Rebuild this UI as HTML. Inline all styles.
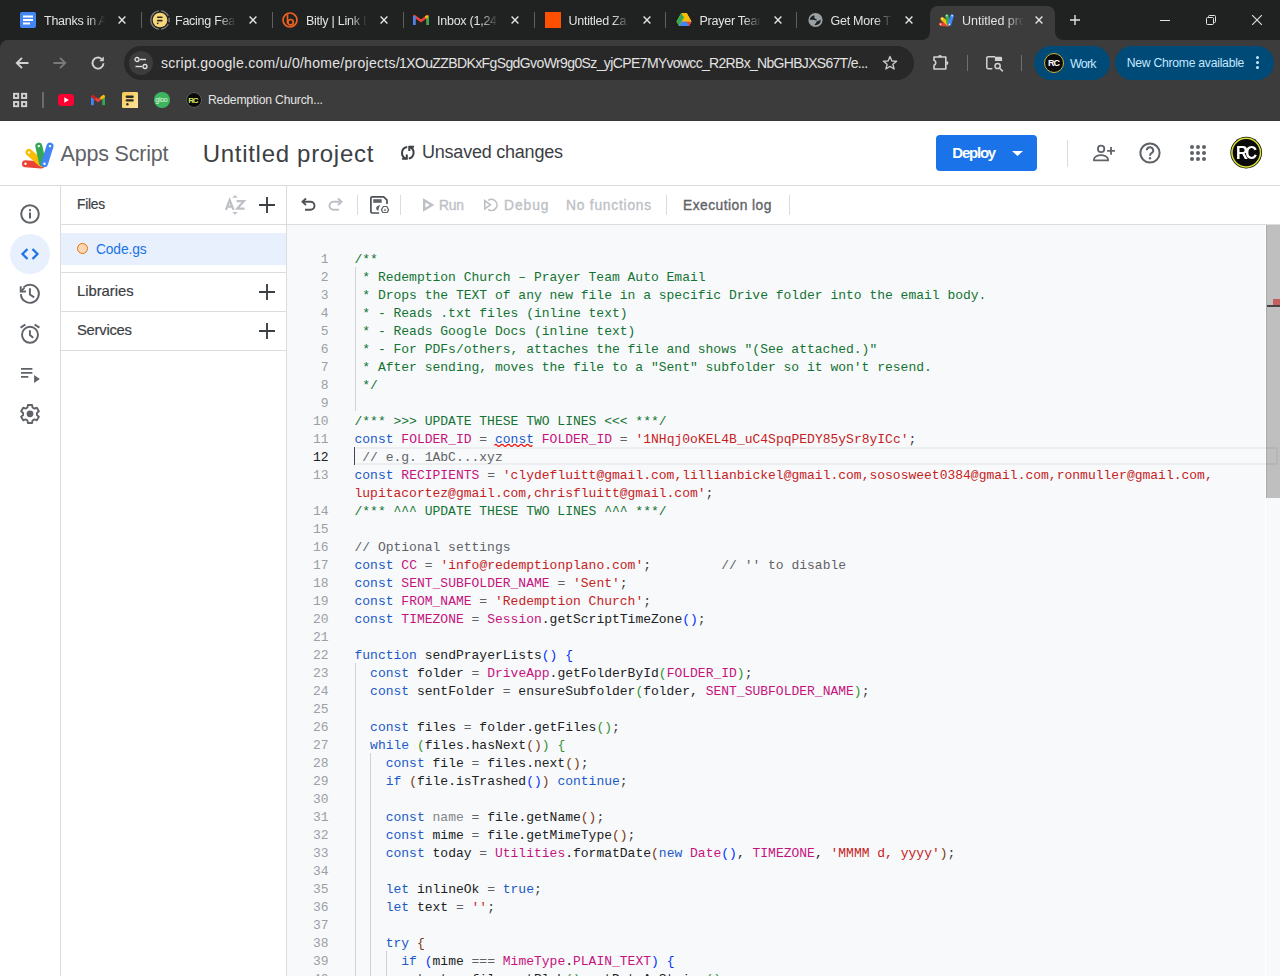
<!DOCTYPE html><html><head><meta charset="utf-8"><title>Apps Script</title><style>
*{margin:0;padding:0;box-sizing:content-box}
html,body{width:1280px;height:976px;overflow:hidden;background:#fff;position:relative}
.r{position:absolute;display:block}
.t{position:absolute;white-space:nowrap}
.ln{position:absolute;left:287px;width:41.6px;text-align:right;font-family:"Liberation Mono",monospace;font-size:13px;line-height:18px;color:#9aa0a6;height:18px}
.ln.cur{color:#202124}
.cl{position:absolute;left:354.5px;font-family:"Liberation Mono",monospace;font-size:13px;line-height:18px;color:#202124;white-space:pre;height:18px}
.c{color:#137333}.k{color:#1b5ac8}.v{color:#c5137e}.s{color:#c5221f}.o{color:#5f6368}.p{color:#3c4043}
.b1{color:#0431fa}.b2{color:#319331}.b3{color:#7b3814}.g{color:#80868b}.cm{color:#5f6368}
</style></head><body>
<div class="r" style="left:0px;top:0px;width:1280px;height:120px;background:#202221;"></div>
<div class="r" style="left:0px;top:40px;width:1280px;height:80px;background:#3c3c3c;border-top-left-radius:8px;"></div>
<svg class="r" style="left:20px;top:12px;overflow:visible;" width="16" height="16" viewBox="0 0 16 16"><rect x="0" y="0" width="16" height="16" rx="2" fill="#4285f4"/><rect x="3" y="3.5" width="10" height="2" fill="#fff"/><rect x="3" y="7" width="10" height="2" fill="#fff"/><rect x="3" y="10.5" width="7" height="2" fill="#fff"/></svg>
<div class="t " style="left:44px;top:11.67px;font-size:12.5px;line-height:18px;color:#e3e3e3;font-weight:400;font-family:'Liberation Sans', sans-serif;letter-spacing:-0.25px;width:61px;overflow:hidden;white-space:nowrap;-webkit-mask-image:linear-gradient(90deg,#000 72%,transparent 100%);">Thanks in A</div>
<svg class="r" style="left:118px;top:16px;" width="8" height="8" viewBox="0 0 8 8"><path d="M0.6 0.6L7.4 7.4M7.4 0.6L0.6 7.4" stroke="#e3e3e3" stroke-width="1.4"/></svg>
<div class="r" style="left:141px;top:12px;width:1px;height:16px;background:#5f5f5f;"></div>
<svg class="r" style="left:151px;top:12px;overflow:visible;" width="16" height="16" viewBox="0 0 16 16"><g transform="translate(1 0)"><path d="M7.04 17.15A9.2 9.2 0 0 1 7.04 -1.15M8.96 -1.15A9.2 9.2 0 0 1 16.27 3.97M16.93 5.77A9.2 9.2 0 0 1 16.93 10.23M16.27 12.03A9.2 9.2 0 0 1 8.96 17.15" fill="none" stroke="#7a7a7a" stroke-width="1.4"/><circle cx="8" cy="8" r="7.3" fill="#f8d77a"/><rect x="4.9" y="4.4" width="5.8" height="1.6" rx="0.8" fill="#2b2b2b"/><rect x="4.9" y="7.8" width="5.8" height="1.6" rx="0.8" fill="#2b2b2b"/><circle cx="5.7" cy="11.3" r="0.9" fill="#2b2b2b"/></g></svg>
<div class="t " style="left:175px;top:11.67px;font-size:12.5px;line-height:18px;color:#e3e3e3;font-weight:400;font-family:'Liberation Sans', sans-serif;letter-spacing:-0.25px;width:61px;overflow:hidden;white-space:nowrap;-webkit-mask-image:linear-gradient(90deg,#000 72%,transparent 100%);">Facing Fear</div>
<svg class="r" style="left:249px;top:16px;" width="8" height="8" viewBox="0 0 8 8"><path d="M0.6 0.6L7.4 7.4M7.4 0.6L0.6 7.4" stroke="#e3e3e3" stroke-width="1.4"/></svg>
<div class="r" style="left:272px;top:12px;width:1px;height:16px;background:#5f5f5f;"></div>
<svg class="r" style="left:282px;top:12px;overflow:visible;" width="16" height="16" viewBox="0 0 16 16"><circle cx="8" cy="8" r="7" fill="none" stroke="#ee6123" stroke-width="1.7"/><path d="M5.5 2.5V11.5" stroke="#ee6123" stroke-width="1.7"/><circle cx="8.6" cy="10.2" r="2.7" fill="none" stroke="#ee6123" stroke-width="1.7"/></svg>
<div class="t " style="left:306px;top:11.67px;font-size:12.5px;line-height:18px;color:#e3e3e3;font-weight:400;font-family:'Liberation Sans', sans-serif;letter-spacing:-0.25px;width:61px;overflow:hidden;white-space:nowrap;-webkit-mask-image:linear-gradient(90deg,#000 72%,transparent 100%);">Bitly | Link D</div>
<svg class="r" style="left:380px;top:16px;" width="8" height="8" viewBox="0 0 8 8"><path d="M0.6 0.6L7.4 7.4M7.4 0.6L0.6 7.4" stroke="#e3e3e3" stroke-width="1.4"/></svg>
<div class="r" style="left:403px;top:12px;width:1px;height:16px;background:#5f5f5f;"></div>
<svg class="r" style="left:413px;top:12px;overflow:visible;" width="16" height="16" viewBox="0 0 16 16"><path d="M1.3 13V4L8 9L14.7 4V13" fill="none" stroke="#ea4335" stroke-width="2.4" stroke-linejoin="round"/><path d="M1.3 13V4" stroke="#4285f4" stroke-width="2.6"/><path d="M14.7 13V4" stroke="#34a853" stroke-width="2.6"/><path d="M12.5 5.6L14.7 4" stroke="#fbbc04" stroke-width="2.6"/></svg>
<div class="t " style="left:437px;top:11.67px;font-size:12.5px;line-height:18px;color:#e3e3e3;font-weight:400;font-family:'Liberation Sans', sans-serif;letter-spacing:-0.25px;width:61px;overflow:hidden;white-space:nowrap;-webkit-mask-image:linear-gradient(90deg,#000 72%,transparent 100%);">Inbox (1,24</div>
<svg class="r" style="left:511px;top:16px;" width="8" height="8" viewBox="0 0 8 8"><path d="M0.6 0.6L7.4 7.4M7.4 0.6L0.6 7.4" stroke="#e3e3e3" stroke-width="1.4"/></svg>
<div class="r" style="left:534px;top:12px;width:1px;height:16px;background:#5f5f5f;"></div>
<svg class="r" style="left:544.5px;top:12px;overflow:visible;" width="16" height="16" viewBox="0 0 16 16"><rect x="0" y="0" width="16" height="16" fill="#ff4f00"/></svg>
<div class="t " style="left:568.5px;top:11.67px;font-size:12.5px;line-height:18px;color:#e3e3e3;font-weight:400;font-family:'Liberation Sans', sans-serif;letter-spacing:-0.25px;width:61px;overflow:hidden;white-space:nowrap;-webkit-mask-image:linear-gradient(90deg,#000 72%,transparent 100%);">Untitled Za</div>
<svg class="r" style="left:642.5px;top:16px;" width="8" height="8" viewBox="0 0 8 8"><path d="M0.6 0.6L7.4 7.4M7.4 0.6L0.6 7.4" stroke="#e3e3e3" stroke-width="1.4"/></svg>
<div class="r" style="left:665px;top:12px;width:1px;height:16px;background:#5f5f5f;"></div>
<svg class="r" style="left:675.5px;top:12px;overflow:visible;" width="16" height="16" viewBox="0 0 16 16"><path d="M5.3 1H10.7L15.5 9.5L12.9 14H3.1L0.5 9.5Z" fill="#fbbc04"/><path d="M5.3 1L0.5 9.5L3.1 14L8 5.6Z" fill="#34a853"/><path d="M3.1 14H12.9L15.5 9.5H5.8Z" fill="#4285f4"/><path d="M15.5 9.5L12.9 14L10.3 9.5Z" fill="#ea4335"/><path d="M10.7 1L15.5 9.5H10.3L8 5.6Z" fill="#fbbc04"/></svg>
<div class="t " style="left:699.5px;top:11.67px;font-size:12.5px;line-height:18px;color:#e3e3e3;font-weight:400;font-family:'Liberation Sans', sans-serif;letter-spacing:-0.25px;width:61px;overflow:hidden;white-space:nowrap;-webkit-mask-image:linear-gradient(90deg,#000 72%,transparent 100%);">Prayer Team</div>
<svg class="r" style="left:773.5px;top:16px;" width="8" height="8" viewBox="0 0 8 8"><path d="M0.6 0.6L7.4 7.4M7.4 0.6L0.6 7.4" stroke="#e3e3e3" stroke-width="1.4"/></svg>
<div class="r" style="left:796px;top:12px;width:1px;height:16px;background:#5f5f5f;"></div>
<svg class="r" style="left:806.5px;top:12px;overflow:visible;" width="16" height="16" viewBox="0 0 16 16"><circle cx="8.5" cy="8" r="7.1" fill="#9aa0a6"/><path d="M2.7 7.7C3 5.6 4.6 3.9 6.9 3.3L7.6 4.3C7.1 5.1 7.2 5.9 8 6.4C8.9 7 9.9 7.3 10.1 8.1L9.1 8.5C7.8 8.1 6.2 7.5 4.4 7.8Z" fill="#202221"/><path d="M13.3 7.6C14 8.7 13.7 10.4 12.3 11.8C11.2 12.8 9.7 13.3 8.1 13.2L7.6 12.3C8.6 11.6 9.3 10.7 9.5 9.7L10.6 8.9C11.4 9.3 12.6 8.6 13.3 7.6Z" fill="#202221"/></svg>
<div class="t " style="left:830.5px;top:11.67px;font-size:12.5px;line-height:18px;color:#e3e3e3;font-weight:400;font-family:'Liberation Sans', sans-serif;letter-spacing:-0.25px;width:61px;overflow:hidden;white-space:nowrap;-webkit-mask-image:linear-gradient(90deg,#000 72%,transparent 100%);">Get More T</div>
<svg class="r" style="left:904.5px;top:16px;" width="8" height="8" viewBox="0 0 8 8"><path d="M0.6 0.6L7.4 7.4M7.4 0.6L0.6 7.4" stroke="#e3e3e3" stroke-width="1.4"/></svg>
<div class="r" style="left:930px;top:6px;width:125px;height:34px;background:#3c3c3c;border-radius:8px 8px 0 0"></div>
<svg class="r" style="left:922px;top:32px" width="8" height="8"><path d="M0 8 A8 8 0 0 0 8 0 L8 8Z" fill="#3c3c3c"/></svg>
<svg class="r" style="left:1055px;top:32px" width="8" height="8"><path d="M8 8 A8 8 0 0 1 0 0 L0 8Z" fill="#3c3c3c"/></svg>
<svg class="r" style="left:937.5px;top:12.5px;" width="17" height="15" viewBox="0 0 17 15"><g transform="scale(0.47)" stroke-linecap="round"><path d="M5.5 23.7L21 25" stroke="#ea4335" stroke-width="7.5"/><path d="M9 12.4L21.5 23.5" stroke="#fbbc04" stroke-width="7.5"/><path d="M18.8 6.1L22.5 23" stroke="#34a853" stroke-width="7.5"/><path d="M30 6.1L24.5 23.7" stroke="#4285f4" stroke-width="7.5"/><circle cx="5.5" cy="23.7" r="1.6" fill="#fff" stroke="none"/><circle cx="9" cy="12.4" r="1.6" fill="#fff"/><circle cx="18.8" cy="6.1" r="1.6" fill="#fff"/><circle cx="30" cy="6.1" r="1.6" fill="#fff"/><circle cx="24.5" cy="23.7" r="1.6" fill="#fff"/></g></svg>
<div class="t " style="left:962px;top:11.67px;font-size:12.5px;line-height:18px;color:#e3e3e3;font-weight:400;font-family:'Liberation Sans', sans-serif;width:62px;overflow:hidden;white-space:nowrap;-webkit-mask-image:linear-gradient(90deg,#000 70%,transparent 100%);">Untitled pro</div>
<svg class="r" style="left:1035px;top:16px;" width="8" height="8" viewBox="0 0 8 8"><path d="M0.6 0.6L7.4 7.4M7.4 0.6L0.6 7.4" stroke="#e3e3e3" stroke-width="1.4"/></svg>
<svg class="r" style="left:1070px;top:15px;" width="10" height="10" viewBox="0 0 10 10"><path d="M5 0V10M0 5H10" stroke="#e3e3e3" stroke-width="1.4"/></svg>
<div class="r" style="left:1160px;top:20px;width:10px;height:1px;background:#e3e3e3;"></div>
<svg class="r" style="left:1206px;top:15px;" width="10" height="10" viewBox="0 0 10 10"><rect x="0.5" y="2.5" width="7" height="7" rx="1" fill="none" stroke="#e3e3e3"/><path d="M2.5 2.5V1.5Q2.5 0.5 3.5 0.5H8.5Q9.5 0.5 9.5 1.5V6.5Q9.5 7.5 8.5 7.5H7.5" fill="none" stroke="#e3e3e3"/></svg>
<svg class="r" style="left:1252px;top:15px;" width="10" height="10" viewBox="0 0 10 10"><path d="M0 0L10 10M10 0L0 10" stroke="#e3e3e3" stroke-width="1.1"/></svg>
<svg class="r" style="left:14px;top:55px;" width="16" height="16" viewBox="0 0 16 16"><path d="M14.5 8H3M8 2.8L2.8 8L8 13.2" fill="none" stroke="#d2d2d2" stroke-width="1.9"/></svg>
<svg class="r" style="left:52px;top:55px;" width="16" height="16" viewBox="0 0 16 16"><path d="M1.5 8H13M8 2.8L13.2 8L8 13.2" fill="none" stroke="#7a7a7a" stroke-width="1.9"/></svg>
<svg class="r" style="left:90px;top:55px;" width="16" height="16" viewBox="0 0 16 16"><path d="M13.5 8.3A5.5 5.5 0 1 1 11.6 3.9" fill="none" stroke="#d2d2d2" stroke-width="1.9"/><path d="M13.8 1.6V6.2H9.2Z" fill="#d2d2d2"/></svg>
<div class="r" style="left:124px;top:46px;width:790px;height:34px;border-radius:17px;background:#282828"></div>
<div class="r" style="left:129px;top:51px;width:24px;height:24px;border-radius:12px;background:#3c3c3c"></div>
<svg class="r" style="left:133px;top:55px;" width="16" height="16" viewBox="0 0 16 16"><circle cx="4" cy="4.5" r="2" fill="none" stroke="#e3e3e3" stroke-width="1.3"/><path d="M7 4.5H13" stroke="#e3e3e3" stroke-width="1.4"/><circle cx="12" cy="11.5" r="2" fill="none" stroke="#e3e3e3" stroke-width="1.3"/><path d="M2.5 11.5H9" stroke="#e3e3e3" stroke-width="1.4"/></svg>
<div class="t " style="left:161px;top:52.95px;font-size:14px;line-height:20px;color:#e3e3e3;font-weight:400;font-family:'Liberation Sans', sans-serif;--tw:239.5;letter-spacing:0.28px;" id="url">script.google.com/u/0/home/projects/</div>
<div class="t " style="left:399px;top:52.95px;font-size:14px;line-height:20px;color:#e3e3e3;font-weight:400;font-family:'Liberation Sans', sans-serif;--tw:264;letter-spacing:-0.61px;" id="url2">1XOuZZBDKxFgSgdGvoWr9g0Sz_yjCPE7MY</div>
<div class="t " style="left:666.5px;top:52.95px;font-size:14px;line-height:20px;color:#e3e3e3;font-weight:400;font-family:'Liberation Sans', sans-serif;--tw:200;letter-spacing:-0.69px;" id="url3">vowcc_R2RBx_NbGHBJXS67T/e...</div>
<svg class="r" style="left:882px;top:55px;" width="16" height="16" viewBox="0 0 16 16"><path d="M8 1.5L9.9 6.1L14.6 6.3L10.9 9.3L12.1 14L8 11.4L3.9 14L5.1 9.3L1.4 6.3L6.1 6.1Z" fill="none" stroke="#c7c7c7" stroke-width="1.4" stroke-linejoin="round"/></svg>
<svg class="r" style="left:926px;top:50px;" width="30" height="26" viewBox="0 0 30 26"><path d="M8 7H19.8V19H8V15.3A2.7 2.7 0 0 0 8 10.2Z" fill="none" stroke="#d2d2d2" stroke-width="1.6" stroke-linejoin="round"/><path d="M12 7A2 2 0 0 1 16 7Z" fill="#d2d2d2"/><path d="M20.4 10.9A2 2 0 0 1 20.4 14.9Z" fill="#d2d2d2"/></svg>
<div class="r" style="left:967px;top:55px;width:1px;height:16px;background:#6f6f6f;"></div>
<svg class="r" style="left:980px;top:50px;" width="30" height="26" viewBox="0 0 30 26"><path d="M12.3 18.7H8.2A1.4 1.4 0 0 1 6.8 17.3V8.1A1.4 1.4 0 0 1 8.2 6.7H15" fill="none" stroke="#d2d2d2" stroke-width="1.5"/><path d="M14.9 6.7H20.8A1.3 1.3 0 0 1 22.1 8V10.9H14.9Z" fill="#d2d2d2"/><circle cx="17.6" cy="16" r="2.6" fill="none" stroke="#d2d2d2" stroke-width="1.5"/><path d="M19.4 18L22.4 20.8" stroke="#d2d2d2" stroke-width="1.6" stroke-linecap="round"/></svg>
<div class="r" style="left:1021px;top:55px;width:1px;height:16px;background:#6f6f6f;"></div>
<div class="r" style="left:1034px;top:46px;width:76px;height:34px;border-radius:17px;background:#004a77"></div>
<div class="r" style="left:1044px;top:53px;width:18px;height:18px;border-radius:50%;background:#0b0b0b;border:1px solid #c9b53a"></div>
<div class="t " style="left:1048px;top:57.38px;font-size:9px;line-height:13px;color:#ffffff;font-weight:700;font-family:'Liberation Sans', sans-serif;letter-spacing:-1px;">RC</div>
<div class="t " style="left:1070px;top:54.87px;font-size:12.5px;line-height:18px;color:#c2e7ff;font-weight:400;font-family:'Liberation Sans', sans-serif;--tw:27.4;letter-spacing:-0.781px;" id="work">Work</div>
<div class="r" style="left:1115px;top:46px;width:159px;height:34px;border-radius:17px;background:#004a77"></div>
<div class="t " style="left:1126.7px;top:55.47px;font-size:12.2px;line-height:17px;color:#c2e7ff;font-weight:400;font-family:'Liberation Sans', sans-serif;--tw:117.3;letter-spacing:-0.258px;" id="newchrome">New Chrome available</div>
<div class="r" style="left:1256px;top:56px;width:3.2px;height:3.2px;border-radius:50%;background:#c2e7ff"></div>
<div class="r" style="left:1256px;top:61px;width:3.2px;height:3.2px;border-radius:50%;background:#c2e7ff"></div>
<div class="r" style="left:1256px;top:66px;width:3.2px;height:3.2px;border-radius:50%;background:#c2e7ff"></div>
<svg class="r" style="left:12px;top:92px;" width="16" height="16" viewBox="0 0 16 16"><rect x="2" y="1.8" width="4.2" height="4.2" fill="none" stroke="#d2d2d2" stroke-width="1.9"/><rect x="2" y="10" width="4.2" height="4.2" fill="none" stroke="#d2d2d2" stroke-width="1.9"/><rect x="10" y="1.8" width="4.2" height="4.2" fill="none" stroke="#d2d2d2" stroke-width="1.9"/><rect x="10" y="10" width="4.2" height="4.2" fill="none" stroke="#d2d2d2" stroke-width="1.9"/></svg>
<div class="r" style="left:42px;top:92px;width:1.5px;height:16px;background:#6b6b6b;"></div>
<svg class="r" style="left:58px;top:93px;" width="16" height="14" viewBox="0 0 16 14"><rect x="0" y="1" width="16" height="12" rx="3.5" fill="#ff0033"/><path d="M6.3 4.3L10.8 7L6.3 9.7Z" fill="#fff"/></svg>
<svg class="r" style="left:90px;top:93px;" width="16" height="14" viewBox="0 0 16 14"><path d="M2.4 3.3L8 7.6L13.6 3.3" fill="none" stroke="#ea4335" stroke-width="2.7" stroke-linejoin="round"/><path d="M2.4 12.2V3" stroke="#4285f4" stroke-width="2.8"/><path d="M13.6 12.2V3" stroke="#34a853" stroke-width="2.8"/><path d="M11.6 4.9L13.6 3.3" stroke="#fbbc04" stroke-width="2.8" stroke-linecap="round"/><path d="M2.4 3.3L4.6 5" stroke="#c5221f" stroke-width="2.8" stroke-linecap="round"/></svg>
<svg class="r" style="left:122px;top:91.6px;" width="16.3" height="16.3" viewBox="0 0 16.3 16.3"><defs><linearGradient id="yg" x1="0" y1="0" x2="1" y2="1"><stop offset="0" stop-color="#f7c94e"/><stop offset="1" stop-color="#fde3a0"/></linearGradient></defs><rect x="0" y="0" width="16.3" height="16.3" rx="1.8" fill="url(#yg)"/><rect x="3.6" y="3.6" width="8.2" height="2.3" rx="1.1" fill="#2b2b2b"/><rect x="3.6" y="7.3" width="8.2" height="2.3" rx="1.1" fill="#2b2b2b"/><circle cx="5.4" cy="12.2" r="1.2" fill="#2b2b2b"/></svg>
<div class="r" style="left:154.1px;top:92.2px;width:15.6px;height:15.6px;border-radius:50%;background:#3cb55e"></div>
<div class="t " style="left:155.3px;top:95.17px;font-size:7px;line-height:10px;color:#e8f5e9;font-weight:400;font-family:'Liberation Sans', sans-serif;letter-spacing:-0.3px;">gloo</div>
<div class="r" style="left:186px;top:92.2px;width:14px;height:14px;border-radius:50%;background:#0b0b0b;border:1.2px solid #5a5a5a"></div>
<div class="t " style="left:188.3px;top:94.93px;font-size:8px;line-height:11px;color:#d8e65a;font-weight:700;font-family:'Liberation Sans', sans-serif;letter-spacing:-1.2px;">RC</div>
<div class="t " style="left:208px;top:91.77px;font-size:12.2px;line-height:17px;color:#e3e3e3;font-weight:400;font-family:'Liberation Sans', sans-serif;--tw:114;letter-spacing:-0.187px;" id="bm">Redemption Church...</div>
<div class="r" style="left:0px;top:120px;width:1280px;height:1px;background:#363837;"></div>
<div class="r" style="left:0px;top:121px;width:1280px;height:64px;background:#ffffff;"></div>
<div class="r" style="left:0px;top:185px;width:1280px;height:1px;background:#dadce0;"></div>
<svg class="r" style="left:20px;top:140px;" width="36" height="30" viewBox="0 0 36 30"><g stroke-linecap="round">
<path d="M5.5 23.7L21 25" stroke="#ea4335" stroke-width="7"/>
<path d="M9 12.4L21.5 23.5" stroke="#fbbc04" stroke-width="7"/>
<path d="M18.8 6.1L22.5 23" stroke="#34a853" stroke-width="7"/>
<path d="M30 6.1L24.5 23.7" stroke="#4285f4" stroke-width="7"/>
</g>
<circle cx="5.5" cy="23.7" r="1.2" fill="#fff"/><circle cx="9" cy="12.4" r="1.2" fill="#fff"/><circle cx="18.8" cy="6.1" r="1.2" fill="#fff"/><circle cx="30" cy="6.1" r="1.2" fill="#fff"/><circle cx="24.5" cy="23.7" r="1.2" fill="#fff"/></svg>
<div class="t " style="left:60.6px;top:138.95px;font-size:21.5px;line-height:30px;color:#5f6368;font-weight:400;font-family:'Liberation Sans', sans-serif;--tw:109;letter-spacing:-0.194px;" id="as">Apps Script</div>
<div class="t " style="left:202.8px;top:136.68px;font-size:24px;line-height:34px;color:#3c4043;font-weight:400;font-family:'Liberation Sans', sans-serif;--tw:169.5;letter-spacing:0.695px;" id="up">Untitled project</div>
<svg class="r" style="left:396px;top:142px;" width="24" height="22" viewBox="0 0 24 22"><path d="M11.2 4.9A6 6 0 0 0 10.3 16.6" fill="none" stroke="#3c4043" stroke-width="2"/><path d="M6.1 16.7H10.8V12.6" fill="none" stroke="#3c4043" stroke-width="2"/><path d="M12.8 16.6A6 6 0 0 0 13.4 5" fill="none" stroke="#3c4043" stroke-width="2"/><path d="M18 4.8H13.3V9" fill="none" stroke="#3c4043" stroke-width="2"/></svg>
<div class="t " style="left:422px;top:139.76px;font-size:18px;line-height:25px;color:#3c4043;font-weight:400;font-family:'Liberation Sans', sans-serif;--tw:140;letter-spacing:-0.223px;" id="us">Unsaved changes</div>
<div class="r" style="left:936px;top:135px;width:101px;height:36px;border-radius:4px;background:#1a73e8"></div>
<div class="t " style="left:952.3px;top:141.80px;font-size:15px;line-height:21px;color:#ffffff;font-weight:700;font-family:'Liberation Sans', sans-serif;--tw:43.1;letter-spacing:-1.223px;" id="deploy">Deploy</div>
<svg class="r" style="left:1012px;top:151px;" width="11" height="5" viewBox="0 0 11 5"><path d="M0 0H11L5.5 5Z" fill="#fff"/></svg>
<div class="r" style="left:1067px;top:140px;width:1px;height:27px;background:#dadce0;"></div>
<svg class="r" style="left:1090px;top:141px;" width="26" height="24" viewBox="0 0 26 24"><circle cx="11.1" cy="7.9" r="3.2" fill="none" stroke="#5f6368" stroke-width="1.8"/><path d="M4 19.4V18.3C4 15.6 8 14.1 11 14.1S18 15.6 18 18.3V19.4Z" fill="none" stroke="#5f6368" stroke-width="1.8" stroke-linejoin="miter"/><path d="M21 5.9V13.7M17.1 9.8H24.9" stroke="#5f6368" stroke-width="1.8"/></svg>
<svg class="r" style="left:1138px;top:141px;" width="24" height="24" viewBox="0 0 24 24"><circle cx="12" cy="12" r="9.6" fill="none" stroke="#5f6368" stroke-width="2"/><path d="M8.8 9.3A3.2 3.2 0 1 1 13.5 12.2C12.5 12.8 12 13.3 12 14.7" fill="none" stroke="#5f6368" stroke-width="2"/><circle cx="12" cy="17.3" r="1.2" fill="#5f6368"/></svg>
<svg class="r" style="left:1188px;top:143px;" width="20" height="20" viewBox="0 0 20 20"><circle cx="4" cy="4" r="2" fill="#5f6368"/><circle cx="4" cy="10" r="2" fill="#5f6368"/><circle cx="4" cy="16" r="2" fill="#5f6368"/><circle cx="10" cy="4" r="2" fill="#5f6368"/><circle cx="10" cy="10" r="2" fill="#5f6368"/><circle cx="10" cy="16" r="2" fill="#5f6368"/><circle cx="16" cy="4" r="2" fill="#5f6368"/><circle cx="16" cy="10" r="2" fill="#5f6368"/><circle cx="16" cy="16" r="2" fill="#5f6368"/></svg>
<svg class="r" style="left:1229px;top:136px;" width="34" height="34" viewBox="0 0 34 34"><circle cx="17.2" cy="16.6" r="15.8" fill="#0a0a0a"/><circle cx="17.2" cy="16.6" r="14.3" fill="none" stroke="#d8e034" stroke-width="1.5"/></svg>
<div class="t " style="left:1236px;top:140.56px;font-size:18px;line-height:25px;color:#ffffff;font-weight:700;font-family:'Liberation Sans', sans-serif;letter-spacing:-3px;transform:scaleX(0.92);transform-origin:left;">RC</div>
<div class="r" style="left:0px;top:186px;width:60px;height:790px;background:#ffffff;"></div>
<div class="r" style="left:60px;top:186px;width:1px;height:790px;background:#dadce0;"></div>
<svg class="r" style="left:20px;top:204px;" width="20" height="20" viewBox="0 0 20 20"><circle cx="10" cy="10" r="8.8" fill="none" stroke="#5f6368" stroke-width="2"/><rect x="9" y="8.5" width="2" height="6" fill="#5f6368"/><rect x="9" y="5.2" width="2" height="2" fill="#5f6368"/></svg>
<div class="r" style="left:10px;top:233.6px;width:40px;height:40px;border-radius:50%;background:#e8f0fe"></div>
<svg class="r" style="left:20px;top:244px;" width="20" height="20" viewBox="0 0 20 20"><path d="M7.5 5L2.5 10L7.5 15M12.5 5L17.5 10L12.5 15" fill="none" stroke="#1a73e8" stroke-width="2.2"/></svg>
<svg class="r" style="left:16px;top:280px;" width="28" height="28" viewBox="0 0 28 28"><path d="M4.9 14.1A9 9 0 1 0 7.6 7.4" fill="none" stroke="#5f6368" stroke-width="1.9"/><path d="M4.7 6.3V11.5H9.9" fill="none" stroke="#5f6368" stroke-width="1.9"/><path d="M5 11.2L8.4 7.8" stroke="#5f6368" stroke-width="1.9"/><path d="M13.9 8.3V14.5L18.2 17.4" fill="none" stroke="#5f6368" stroke-width="1.9"/></svg>
<svg class="r" style="left:16px;top:320px;" width="28" height="28" viewBox="0 0 28 28"><circle cx="14" cy="14.8" r="8" fill="none" stroke="#5f6368" stroke-width="1.9"/><path d="M13.9 10.3V15L17.2 17.8" fill="none" stroke="#5f6368" stroke-width="1.9"/><path d="M4.6 7.7L9.4 4.5M23.4 7.7L18.6 4.5" stroke="#5f6368" stroke-width="2"/></svg>
<svg class="r" style="left:16px;top:360px;" width="28" height="28" viewBox="0 0 28 28"><path d="M5 8.9H16.4M5 12.9H16.4M5 16.9H12.3" stroke="#5f6368" stroke-width="1.9"/><path d="M18.1 14.9V22.9L23.8 18.9Z" fill="#5f6368"/></svg>
<svg class="r" style="left:16px;top:400px;" width="28" height="28" viewBox="0 0 28 28"><path d="M11.49 7.46 L11.91 4.94 L16.09 4.94 L16.51 7.46 L18.41 8.56 L20.80 7.66 L22.89 11.28 L20.91 12.90 L20.91 15.10 L22.89 16.72 L20.80 20.34 L18.41 19.44 L16.51 20.54 L16.09 23.06 L11.91 23.06 L11.49 20.54 L9.59 19.44 L7.20 20.34 L5.11 16.72 L7.09 15.10 L7.09 12.90 L5.11 11.28 L7.20 7.66 L9.59 8.56Z" fill="none" stroke="#5f6368" stroke-width="1.9" stroke-linejoin="round"/><circle cx="14" cy="13.8" r="3.4" fill="#5f6368"/></svg>
<div class="r" style="left:61px;top:186px;width:225px;height:790px;background:#ffffff;"></div>
<div class="r" style="left:286px;top:186px;width:1px;height:790px;background:#dadce0;"></div>
<div class="t " style="left:77px;top:195.22px;font-size:13.8px;line-height:19px;color:#3c4043;font-weight:400;font-family:'Liberation Sans', sans-serif;--tw:28.8;-webkit-text-stroke:0.2px #3c4043;letter-spacing:-0.235px;" id="files">Files</div>
<svg class="r" style="left:222px;top:192px;" width="26" height="26" viewBox="0 0 26 26"><path d="M3.9 17.8L7.7 8.1L11.5 17.8M5.2 14.6H10.2" fill="none" stroke="#bdc1c6" stroke-width="2.3"/><path d="M14.6 9.2H21.8L15.3 16.6H22.6" fill="none" stroke="#bdc1c6" stroke-width="2.3" stroke-linejoin="miter"/><path d="M10.2 5.7L13 2.9L15.8 5.7Z M10.2 20L13 22.8L15.8 20Z" fill="#bdc1c6"/></svg>
<svg class="r" style="left:258.4px;top:196px;" width="18" height="18" viewBox="0 0 18 18"><path d="M9 1V17M1 9H17" stroke="#3c4043" stroke-width="1.9"/></svg>
<div class="r" style="left:61px;top:224px;width:225px;height:1px;background:#dadce0;"></div>
<div class="r" style="left:61px;top:233px;width:225px;height:32px;background:#e8f0fe;"></div>
<div class="r" style="left:77px;top:243.3px;width:9px;height:9px;border-radius:50%;background:#fdd6b6;border:1px solid #e37400"></div>
<div class="t " style="left:96px;top:240.02px;font-size:13.8px;line-height:19px;color:#1a73e8;font-weight:400;font-family:'Liberation Sans', sans-serif;--tw:49.4;letter-spacing:-0.131px;" id="codegs">Code.gs</div>
<div class="r" style="left:61px;top:272px;width:225px;height:1px;background:#dadce0;"></div>
<div class="t " style="left:77px;top:281.37px;font-size:14.8px;line-height:21px;color:#3c4043;font-weight:400;font-family:'Liberation Sans', sans-serif;--tw:55.4;-webkit-text-stroke:0.2px #3c4043;letter-spacing:-0.019px;" id="libs">Libraries</div>
<svg class="r" style="left:258.4px;top:283px;" width="18" height="18" viewBox="0 0 18 18"><path d="M9 1V17M1 9H17" stroke="#3c4043" stroke-width="1.9"/></svg>
<div class="r" style="left:61px;top:311px;width:225px;height:1px;background:#dadce0;"></div>
<div class="t " style="left:77px;top:319.57px;font-size:14.8px;line-height:21px;color:#3c4043;font-weight:400;font-family:'Liberation Sans', sans-serif;--tw:55;-webkit-text-stroke:0.2px #3c4043;letter-spacing:-0.25px;" id="svcs">Services</div>
<svg class="r" style="left:258.4px;top:321.6px;" width="18" height="18" viewBox="0 0 18 18"><path d="M9 1V17M1 9H17" stroke="#3c4043" stroke-width="1.9"/></svg>
<div class="r" style="left:61px;top:350px;width:225px;height:1px;background:#dadce0;"></div>
<div class="r" style="left:287px;top:186px;width:993px;height:38px;background:#ffffff;"></div>
<div class="r" style="left:287px;top:224px;width:993px;height:1px;background:#dadce0;"></div>
<svg class="r" style="left:299px;top:196px;" width="18" height="18" viewBox="0 0 18 18"><path d="M6 13.8H11.5A4 4 0 0 0 11.5 5.8H4" fill="none" stroke="#4d5156" stroke-width="1.9"/><path d="M7 2.5L3.5 5.8L7 9.1" fill="none" stroke="#4d5156" stroke-width="1.9"/></svg>
<svg class="r" style="left:327px;top:196px;" width="18" height="18" viewBox="0 0 18 18"><path d="M12 13.8H6.5A4 4 0 0 1 6.5 5.8H14" fill="none" stroke="#bdc1c6" stroke-width="2"/><path d="M11 2.5L14.5 5.8L11 9.1" fill="none" stroke="#bdc1c6" stroke-width="2"/></svg>
<div class="r" style="left:357px;top:195px;width:1px;height:20px;background:#dadce0;"></div>
<svg class="r" style="left:364px;top:192px;" width="30" height="26" viewBox="0 0 30 26"><path d="M15.2 21H8.1Q6.9 21 6.9 19.8V6.1Q6.9 4.9 8.1 4.9H19.7L23 8.2V12" fill="none" stroke="#4d5156" stroke-width="1.7" stroke-linejoin="round"/><rect x="9.2" y="7.2" width="8.5" height="3.6" fill="#5f6368"/><path d="M16.3 13.1C13.6 13.4 12 14.9 12.1 16.3C12.2 17.6 13 18.5 14.4 18.7C14.6 17.2 14.9 15.3 16.3 13.1Z" fill="#5f6368"/><path d="M19.3 14.5H22.8L24.6 17.9L23.2 20.5H18.8L17.4 17.9Z" fill="none" stroke="#5f6368" stroke-width="1.2" stroke-linejoin="round"/><path d="M21 16.3L22.6 19.1H19.4Z" fill="#8a8e93"/></svg>
<div class="r" style="left:400px;top:195px;width:1px;height:20px;background:#dadce0;"></div>
<svg class="r" style="left:421px;top:197px;" width="14" height="16" viewBox="0 0 14 16"><path d="M3.2 3.3L11 8L3.2 12.7Z" fill="none" stroke="#bdc1c6" stroke-width="2.4" stroke-linejoin="miter"/></svg>
<div class="t " style="left:439px;top:195.92px;font-size:13.8px;line-height:19px;color:#bdc1c6;font-weight:400;font-family:'Liberation Sans', sans-serif;--tw:23;-webkit-text-stroke:0.35px #bdc1c6;letter-spacing:-0.156px;" id="run">Run</div>
<svg class="r" style="left:478px;top:192px;" width="26" height="26" viewBox="0 0 26 26"><path d="M6.8 8.6L12.4 12.8L6.8 17Z" fill="none" stroke="#bdc1c6" stroke-width="1.6" stroke-linejoin="miter"/><path d="M10.2 8.3A5.6 5.6 0 1 1 10.2 17.5" fill="none" stroke="#bdc1c6" stroke-width="1.6"/></svg>
<div class="t " style="left:504px;top:195.92px;font-size:13.8px;line-height:19px;color:#bdc1c6;font-weight:400;font-family:'Liberation Sans', sans-serif;--tw:42.5;-webkit-text-stroke:0.35px #bdc1c6;letter-spacing:0.957px;" id="debug">Debug</div>
<div class="t " style="left:566px;top:195.92px;font-size:13.8px;line-height:19px;color:#bdc1c6;font-weight:400;font-family:'Liberation Sans', sans-serif;--tw:83.8;-webkit-text-stroke:0.35px #bdc1c6;letter-spacing:0.774px;" id="nofn">No functions</div>
<div class="r" style="left:666px;top:195px;width:1px;height:20px;background:#dadce0;"></div>
<div class="t " style="left:683px;top:195.92px;font-size:13.8px;line-height:19px;color:#5f6368;font-weight:400;font-family:'Liberation Sans', sans-serif;--tw:88.6;-webkit-text-stroke:0.35px #5f6368;letter-spacing:0.465px;" id="exlog">Execution log</div>
<div class="r" style="left:789px;top:195px;width:1px;height:20px;background:#dadce0;"></div>
<div class="r" style="left:287px;top:225px;width:979px;height:751px;background:#f8f9fa;"></div>
<div class="ln" style="top:251px">1</div>
<div class="cl" style="top:251px"><span class="c">/**</span></div>
<div class="ln" style="top:269px">2</div>
<div class="cl" style="top:269px"><span class="c"> * Redemption Church – Prayer Team Auto Email</span></div>
<div class="ln" style="top:287px">3</div>
<div class="cl" style="top:287px"><span class="c"> * Drops the TEXT of any new file in a specific Drive folder into the email body.</span></div>
<div class="ln" style="top:305px">4</div>
<div class="cl" style="top:305px"><span class="c"> * - Reads .txt files (inline text)</span></div>
<div class="ln" style="top:323px">5</div>
<div class="cl" style="top:323px"><span class="c"> * - Reads Google Docs (inline text)</span></div>
<div class="ln" style="top:341px">6</div>
<div class="cl" style="top:341px"><span class="c"> * - For PDFs/others, attaches the file and shows &quot;(See attached.)&quot;</span></div>
<div class="ln" style="top:359px">7</div>
<div class="cl" style="top:359px"><span class="c"> * After sending, moves the file to a &quot;Sent&quot; subfolder so it won&#x27;t resend.</span></div>
<div class="ln" style="top:377px">8</div>
<div class="cl" style="top:377px"><span class="c"> */</span></div>
<div class="ln" style="top:395px">9</div>
<div class="cl" style="top:395px"></div>
<div class="ln" style="top:413px">10</div>
<div class="cl" style="top:413px"><span class="c">/*** &gt;&gt;&gt; UPDATE THESE TWO LINES &lt;&lt;&lt; ***/</span></div>
<div class="ln" style="top:431px">11</div>
<div class="cl" style="top:431px"><span class="k">const</span> <span class="v">FOLDER_ID</span> <span class="o">=</span> <span class="k">const</span> <span class="v">FOLDER_ID</span> <span class="o">=</span> <span class="s">&#x27;1NHqj0oKEL4B_uC4SpqPEDY85ySr8yICc&#x27;</span><span class="p">;</span></div>
<div class="ln cur" style="top:449px">12</div>
<div class="cl" style="top:449px"><span class="cm"> // e.g. 1AbC...xyz</span></div>
<div class="ln" style="top:467px">13</div>
<div class="cl" style="top:467px"><span class="k">const</span> <span class="v">RECIPIENTS</span> <span class="o">=</span> <span class="s">&#x27;clydefluitt@gmail.com,lillianbickel@gmail.com,sososweet0384@gmail.com,ronmuller@gmail.com,</span></div>
<div class="cl" style="top:485px"><span class="s">lupitacortez@gmail.com,chrisfluitt@gmail.com&#x27;</span><span class="p">;</span></div>
<div class="ln" style="top:503px">14</div>
<div class="cl" style="top:503px"><span class="c">/*** ^^^ UPDATE THESE TWO LINES ^^^ ***/</span></div>
<div class="ln" style="top:521px">15</div>
<div class="cl" style="top:521px"></div>
<div class="ln" style="top:539px">16</div>
<div class="cl" style="top:539px"><span class="cm">// Optional settings</span></div>
<div class="ln" style="top:557px">17</div>
<div class="cl" style="top:557px"><span class="k">const</span> <span class="v">CC</span> <span class="o">=</span> <span class="s">&#x27;info@redemptionplano.com&#x27;</span><span class="p">;</span>         <span class="cm">// &#x27;&#x27; to disable</span></div>
<div class="ln" style="top:575px">18</div>
<div class="cl" style="top:575px"><span class="k">const</span> <span class="v">SENT_SUBFOLDER_NAME</span> <span class="o">=</span> <span class="s">&#x27;Sent&#x27;</span><span class="p">;</span></div>
<div class="ln" style="top:593px">19</div>
<div class="cl" style="top:593px"><span class="k">const</span> <span class="v">FROM_NAME</span> <span class="o">=</span> <span class="s">&#x27;Redemption Church&#x27;</span><span class="p">;</span></div>
<div class="ln" style="top:611px">20</div>
<div class="cl" style="top:611px"><span class="k">const</span> <span class="v">TIMEZONE</span> <span class="o">=</span> <span class="v">Session</span>.getScriptTimeZone<span class="b1">()</span><span class="p">;</span></div>
<div class="ln" style="top:629px">21</div>
<div class="cl" style="top:629px"></div>
<div class="ln" style="top:647px">22</div>
<div class="cl" style="top:647px"><span class="k">function</span> sendPrayerLists<span class="b1">()</span> <span class="b1">{</span></div>
<div class="ln" style="top:665px">23</div>
<div class="cl" style="top:665px">  <span class="k">const</span> folder <span class="o">=</span> <span class="v">DriveApp</span>.getFolderById<span class="b2">(</span><span class="v">FOLDER_ID</span><span class="b2">)</span><span class="p">;</span></div>
<div class="ln" style="top:683px">24</div>
<div class="cl" style="top:683px">  <span class="k">const</span> sentFolder <span class="o">=</span> ensureSubfolder<span class="b2">(</span>folder, <span class="v">SENT_SUBFOLDER_NAME</span><span class="b2">)</span><span class="p">;</span></div>
<div class="ln" style="top:701px">25</div>
<div class="cl" style="top:701px"></div>
<div class="ln" style="top:719px">26</div>
<div class="cl" style="top:719px">  <span class="k">const</span> files <span class="o">=</span> folder.getFiles<span class="b2">()</span><span class="p">;</span></div>
<div class="ln" style="top:737px">27</div>
<div class="cl" style="top:737px">  <span class="k">while</span> <span class="b2">(</span>files.hasNext<span class="b3">()</span><span class="b2">)</span> <span class="b2">{</span></div>
<div class="ln" style="top:755px">28</div>
<div class="cl" style="top:755px">    <span class="k">const</span> file <span class="o">=</span> files.next<span class="b3">()</span><span class="p">;</span></div>
<div class="ln" style="top:773px">29</div>
<div class="cl" style="top:773px">    <span class="k">if</span> <span class="b3">(</span>file.isTrashed<span class="b1">()</span><span class="b3">)</span> <span class="k">continue</span><span class="p">;</span></div>
<div class="ln" style="top:791px">30</div>
<div class="cl" style="top:791px"></div>
<div class="ln" style="top:809px">31</div>
<div class="cl" style="top:809px">    <span class="k">const</span> <span class="g">name</span> <span class="o">=</span> file.getName<span class="b3">()</span><span class="p">;</span></div>
<div class="ln" style="top:827px">32</div>
<div class="cl" style="top:827px">    <span class="k">const</span> mime <span class="o">=</span> file.getMimeType<span class="b3">()</span><span class="p">;</span></div>
<div class="ln" style="top:845px">33</div>
<div class="cl" style="top:845px">    <span class="k">const</span> today <span class="o">=</span> <span class="v">Utilities</span>.formatDate<span class="b3">(</span><span class="k">new</span> <span class="v">Date</span><span class="b1">()</span>, <span class="v">TIMEZONE</span>, <span class="s">&#x27;MMMM d, yyyy&#x27;</span><span class="b3">)</span><span class="p">;</span></div>
<div class="ln" style="top:863px">34</div>
<div class="cl" style="top:863px"></div>
<div class="ln" style="top:881px">35</div>
<div class="cl" style="top:881px">    <span class="k">let</span> inlineOk <span class="o">=</span> <span class="k">true</span><span class="p">;</span></div>
<div class="ln" style="top:899px">36</div>
<div class="cl" style="top:899px">    <span class="k">let</span> text <span class="o">=</span> <span class="s">&#x27;&#x27;</span><span class="p">;</span></div>
<div class="ln" style="top:917px">37</div>
<div class="cl" style="top:917px"></div>
<div class="ln" style="top:935px">38</div>
<div class="cl" style="top:935px">    <span class="k">try</span> <span class="b3">{</span></div>
<div class="ln" style="top:953px">39</div>
<div class="cl" style="top:953px">      <span class="k">if</span> <span class="b1">(</span>mime <span class="o">===</span> <span class="v">MimeType</span>.<span class="v">PLAIN_TEXT</span><span class="b1">)</span> <span class="b1">{</span></div>
<div class="ln" style="top:971px">40</div>
<div class="cl" style="top:971px">        text <span class="o">=</span> file.getBlob<span class="b2">()</span>.getDataAsString<span class="b2">()</span><span class="p">;</span></div>
<div class="r" style="left:354.5px;top:267px;width:1px;height:144px;background:#d3d3d3"></div>
<div class="r" style="left:354.5px;top:663px;width:1px;height:324px;background:#d3d3d3"></div>
<div class="r" style="left:370.1px;top:753px;width:1px;height:234px;background:#d3d3d3"></div>
<div class="r" style="left:385.7px;top:951px;width:1px;height:36px;background:#d3d3d3"></div>
<svg class="r" style="left:494px;top:441.7px" width="40" height="6"><path d="M0.5 3.5 Q1.60 1.3 3.20 3.3 Q4.80 5.2 6.40 3.3 Q8.00 1.3 9.60 3.3 Q11.20 5.2 12.80 3.3 Q14.40 1.3 16.00 3.3 Q17.60 5.2 19.20 3.3 Q20.80 1.3 22.40 3.3 Q24.00 5.2 25.60 3.3 Q27.20 1.3 28.80 3.3 Q30.40 5.2 32.00 3.3 Q33.60 1.3 35.20 3.3 Q36.80 5.2 38.40 3.3" fill="none" stroke="#f0140a" stroke-width="1.3"/></svg>
<div class="r" style="left:354px;top:447px;width:1.3px;height:18px;background:#444"></div>
<div class="r" style="left:1265px;top:225px;width:15px;height:751px;background:#f8f9fa;border-left:1px solid #ffffff"></div>
<div class="r" style="left:1266px;top:225px;width:1px;height:273px;background:#a9a9a9"></div>
<div class="r" style="left:1267px;top:225px;width:13px;height:273px;background:#bfbfbf"></div>
<div class="r" style="left:1273px;top:299px;width:7px;height:6px;background:#c65e5e"></div>
<div class="r" style="left:1267px;top:305px;width:13px;height:2px;background:#454545"></div>
<div class="r" style="left:356px;top:447px;width:920px;height:14px;border:2px solid rgba(0,0,0,0.045);border-left:none"></div>
</body></html>
